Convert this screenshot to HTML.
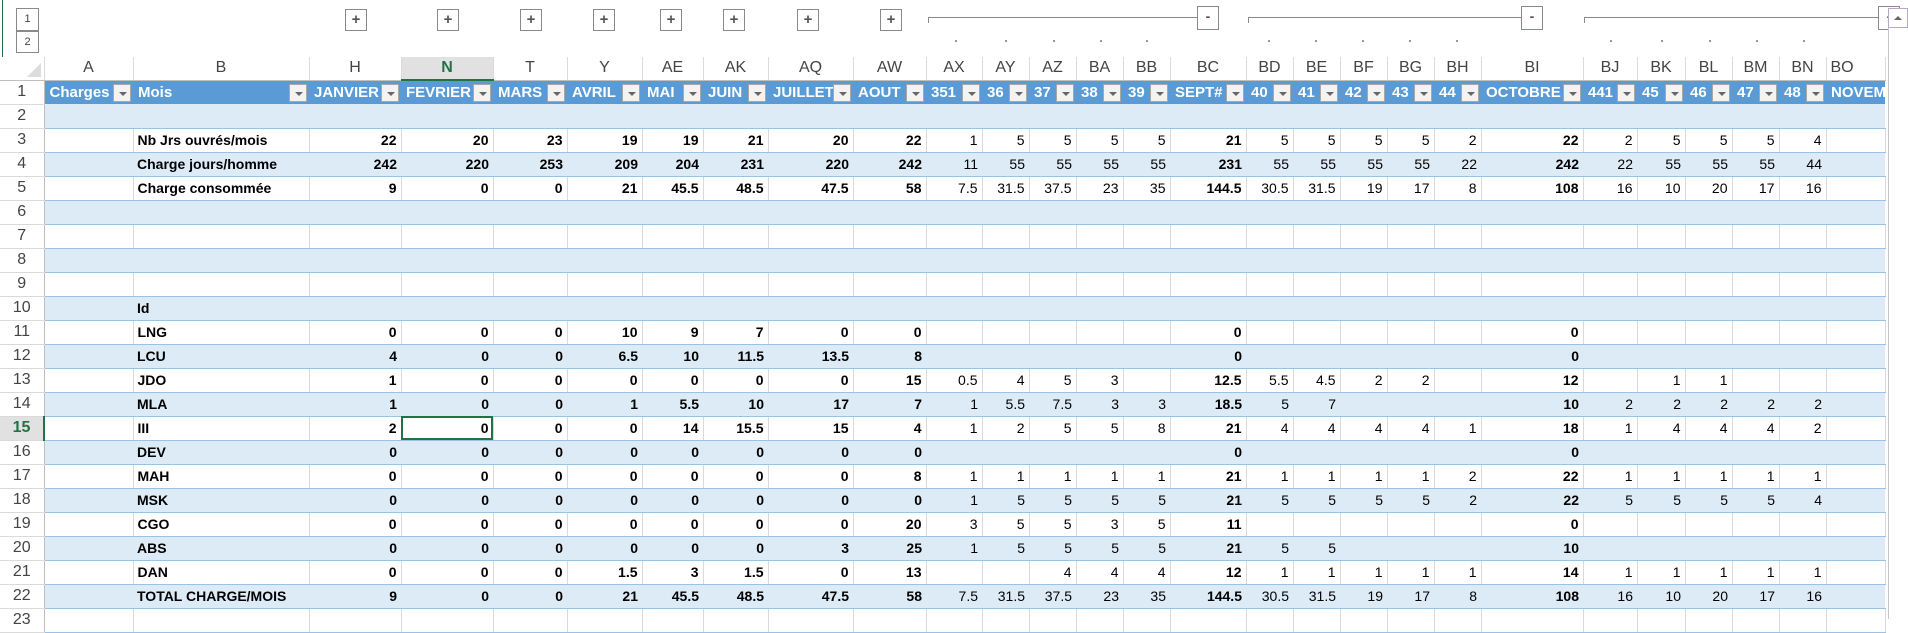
<!DOCTYPE html>
<html><head><meta charset="utf-8">
<style>
*{margin:0;padding:0;box-sizing:border-box}
body{width:1908px;height:619px;overflow:hidden;background:#fff;font-family:"Liberation Sans",sans-serif;position:relative}
.ob{position:absolute;border:1px solid #8a8a8a;background:#fff;font-size:11px;color:#444;text-align:center}
.pl{position:absolute;top:9px;width:22px;height:22px;border:1px solid #8a8a8a;background:#fff;color:#555;font-size:15px;line-height:19px;text-align:center;font-weight:bold}
.gl{position:absolute;top:17px;height:6px;border-top:1px solid #8a8a8a;border-left:1px solid #8a8a8a}
.mb{position:absolute;top:6px;width:22px;height:24px;border:1px solid #8a8a8a;background:#fff;color:#6b4a5a;font-size:14px;line-height:18px;text-align:center;font-weight:bold}
.dt{position:absolute;top:40px;width:2px;height:2px;background:#999}
table{position:absolute;top:57px;left:0;border-collapse:collapse;table-layout:fixed;width:1885px}
td{height:24px;font-size:14px;white-space:nowrap;overflow:hidden;padding:0 4px;text-align:right;font-weight:bold;color:#000;position:relative}
tr.ch td{height:23px;font-weight:normal;text-align:center;color:#444;font-size:16px;border-right:1px solid #dadada;border-bottom:1px solid #bfbfbf}
td.rh{text-align:center;font-weight:normal;color:#444;font-size:16px;border-right:1px solid #bfbfbf;border-bottom:1px solid #dadada;background:#fff;padding:0}
tr.h td:not(.rh){background:#5b9bd5;color:#fff;text-align:left;font-size:15px;padding-left:5px}
tr.b td:not(.rh){background:#ddebf7;border-bottom:1px solid #9bc2e6}
tr.w td:not(.rh){background:#fff;border-bottom:1px solid #9bc2e6;border-right:1px solid #d9d9d9}
td.l{text-align:left}
tr td:nth-child(n+12):nth-child(-n+16),tr td:nth-child(n+18):nth-child(-n+22),tr td:nth-child(n+24):nth-child(-n+28){font-weight:normal}
tr.h td:nth-child(n+2){font-weight:bold!important}
.dd{position:absolute;right:2px;top:3px;width:18px;height:18px;background:#f3f3f3;border:1px solid #a8a8a8}
.dd:after{content:"";position:absolute;left:5px;top:7px;border-left:4px solid transparent;border-right:4px solid transparent;border-top:4px solid #666}
.sel{outline:2px solid #217346;outline-offset:-2px}
</style></head><body>
<div style="position:absolute;left:2px;top:0;width:1px;height:619px;background:#217346"></div>
<div class="ob" style="left:16px;top:8px;width:23px;height:23px;line-height:21px">1</div>
<div class="ob" style="left:16px;top:31px;width:23px;height:22px;line-height:20px">2</div>
<div class="pl" style="left:345px">+</div>
<div class="pl" style="left:437px">+</div>
<div class="pl" style="left:520px">+</div>
<div class="pl" style="left:593px">+</div>
<div class="pl" style="left:660px">+</div>
<div class="pl" style="left:723px">+</div>
<div class="pl" style="left:797px">+</div>
<div class="pl" style="left:880px">+</div>
<div class="gl" style="left:928px;width:269px"></div><div class="mb" style="left:1197px">-</div>
<div class="gl" style="left:1248px;width:273px"></div><div class="mb" style="left:1521px">-</div>
<div class="gl" style="left:1584px;width:300px"></div><div class="mb" style="left:1878px">-</div>
<div class="dt" style="left:955px"></div><div class="dt" style="left:1005px"></div><div class="dt" style="left:1053px"></div><div class="dt" style="left:1100px"></div><div class="dt" style="left:1146px"></div>
<div class="dt" style="left:1268px"></div><div class="dt" style="left:1315px"></div><div class="dt" style="left:1362px"></div><div class="dt" style="left:1409px"></div><div class="dt" style="left:1456px"></div>
<div class="dt" style="left:1610px"></div><div class="dt" style="left:1661px"></div><div class="dt" style="left:1709px"></div><div class="dt" style="left:1756px"></div><div class="dt" style="left:1803px"></div>
<table>
<colgroup><col style="width:44px"><col style="width:89px"><col style="width:176px"><col style="width:92px"><col style="width:92px"><col style="width:74px"><col style="width:75px"><col style="width:61px"><col style="width:65px"><col style="width:85px"><col style="width:73px"><col style="width:56px"><col style="width:47px"><col style="width:47px"><col style="width:47px"><col style="width:47px"><col style="width:76px"><col style="width:47px"><col style="width:47px"><col style="width:47px"><col style="width:47px"><col style="width:47px"><col style="width:102px"><col style="width:54px"><col style="width:48px"><col style="width:47px"><col style="width:47px"><col style="width:47px"><col style="width:59px"></colgroup>
<tr class="ch"><td style="background:#fff;position:relative"><div style="position:absolute;right:3px;bottom:3px;border-left:14px solid transparent;border-bottom:14px solid #dcdcdc"></div></td><td>A</td><td>B</td><td>H</td><td style="background:#e1e1e1;color:#217346;font-weight:bold;border-bottom:2px solid #217346">N</td><td>T</td><td>Y</td><td>AE</td><td>AK</td><td>AQ</td><td>AW</td><td>AX</td><td>AY</td><td>AZ</td><td>BA</td><td>BB</td><td>BC</td><td>BD</td><td>BE</td><td>BF</td><td>BG</td><td>BH</td><td>BI</td><td>BJ</td><td>BK</td><td>BL</td><td>BM</td><td>BN</td><td style="text-align:left">BO</td></tr>
<tr class="h"><td class="rh">1</td><td>Charges<span class="dd"></span></td><td>Mois<span class="dd"></span></td><td>JANVIER<span class="dd"></span></td><td>FEVRIER<span class="dd"></span></td><td>MARS<span class="dd"></span></td><td>AVRIL<span class="dd"></span></td><td>MAI<span class="dd"></span></td><td>JUIN<span class="dd"></span></td><td>JUILLET<span class="dd"></span></td><td>AOUT<span class="dd"></span></td><td>351<span class="dd"></span></td><td>36<span class="dd"></span></td><td>37<span class="dd"></span></td><td>38<span class="dd"></span></td><td>39<span class="dd"></span></td><td>SEPT#<span class="dd"></span></td><td>40<span class="dd"></span></td><td>41<span class="dd"></span></td><td>42<span class="dd"></span></td><td>43<span class="dd"></span></td><td>44<span class="dd"></span></td><td>OCTOBRE<span class="dd"></span></td><td>441<span class="dd"></span></td><td>45<span class="dd"></span></td><td>46<span class="dd"></span></td><td>47<span class="dd"></span></td><td>48<span class="dd"></span></td><td>NOVEMBRE</td></tr>
<tr class="b"><td class="rh">2</td><td></td><td></td><td></td><td></td><td></td><td></td><td></td><td></td><td></td><td></td><td></td><td></td><td></td><td></td><td></td><td></td><td></td><td></td><td></td><td></td><td></td><td></td><td></td><td></td><td></td><td></td><td></td><td></td></tr>
<tr class="w"><td class="rh">3</td><td></td><td class="l">Nb Jrs ouvrés/mois</td><td>22</td><td>20</td><td>23</td><td>19</td><td>19</td><td>21</td><td>20</td><td>22</td><td>1</td><td>5</td><td>5</td><td>5</td><td>5</td><td>21</td><td>5</td><td>5</td><td>5</td><td>5</td><td>2</td><td>22</td><td>2</td><td>5</td><td>5</td><td>5</td><td>4</td><td></td></tr>
<tr class="b"><td class="rh">4</td><td></td><td class="l">Charge jours/homme</td><td>242</td><td>220</td><td>253</td><td>209</td><td>204</td><td>231</td><td>220</td><td>242</td><td>11</td><td>55</td><td>55</td><td>55</td><td>55</td><td>231</td><td>55</td><td>55</td><td>55</td><td>55</td><td>22</td><td>242</td><td>22</td><td>55</td><td>55</td><td>55</td><td>44</td><td></td></tr>
<tr class="w"><td class="rh">5</td><td></td><td class="l">Charge consommée</td><td>9</td><td>0</td><td>0</td><td>21</td><td>45.5</td><td>48.5</td><td>47.5</td><td>58</td><td>7.5</td><td>31.5</td><td>37.5</td><td>23</td><td>35</td><td>144.5</td><td>30.5</td><td>31.5</td><td>19</td><td>17</td><td>8</td><td>108</td><td>16</td><td>10</td><td>20</td><td>17</td><td>16</td><td></td></tr>
<tr class="b"><td class="rh">6</td><td></td><td></td><td></td><td></td><td></td><td></td><td></td><td></td><td></td><td></td><td></td><td></td><td></td><td></td><td></td><td></td><td></td><td></td><td></td><td></td><td></td><td></td><td></td><td></td><td></td><td></td><td></td><td></td></tr>
<tr class="w"><td class="rh">7</td><td></td><td></td><td></td><td></td><td></td><td></td><td></td><td></td><td></td><td></td><td></td><td></td><td></td><td></td><td></td><td></td><td></td><td></td><td></td><td></td><td></td><td></td><td></td><td></td><td></td><td></td><td></td><td></td></tr>
<tr class="b"><td class="rh">8</td><td></td><td></td><td></td><td></td><td></td><td></td><td></td><td></td><td></td><td></td><td></td><td></td><td></td><td></td><td></td><td></td><td></td><td></td><td></td><td></td><td></td><td></td><td></td><td></td><td></td><td></td><td></td><td></td></tr>
<tr class="w"><td class="rh">9</td><td></td><td></td><td></td><td></td><td></td><td></td><td></td><td></td><td></td><td></td><td></td><td></td><td></td><td></td><td></td><td></td><td></td><td></td><td></td><td></td><td></td><td></td><td></td><td></td><td></td><td></td><td></td><td></td></tr>
<tr class="b"><td class="rh">10</td><td></td><td class="l">Id</td><td></td><td></td><td></td><td></td><td></td><td></td><td></td><td></td><td></td><td></td><td></td><td></td><td></td><td></td><td></td><td></td><td></td><td></td><td></td><td></td><td></td><td></td><td></td><td></td><td></td><td></td></tr>
<tr class="w"><td class="rh">11</td><td></td><td class="l">LNG</td><td>0</td><td>0</td><td>0</td><td>10</td><td>9</td><td>7</td><td>0</td><td>0</td><td></td><td></td><td></td><td></td><td></td><td>0</td><td></td><td></td><td></td><td></td><td></td><td>0</td><td></td><td></td><td></td><td></td><td></td><td></td></tr>
<tr class="b"><td class="rh">12</td><td></td><td class="l">LCU</td><td>4</td><td>0</td><td>0</td><td>6.5</td><td>10</td><td>11.5</td><td>13.5</td><td>8</td><td></td><td></td><td></td><td></td><td></td><td>0</td><td></td><td></td><td></td><td></td><td></td><td>0</td><td></td><td></td><td></td><td></td><td></td><td></td></tr>
<tr class="w"><td class="rh">13</td><td></td><td class="l">JDO</td><td>1</td><td>0</td><td>0</td><td>0</td><td>0</td><td>0</td><td>0</td><td>15</td><td>0.5</td><td>4</td><td>5</td><td>3</td><td></td><td>12.5</td><td>5.5</td><td>4.5</td><td>2</td><td>2</td><td></td><td>12</td><td></td><td>1</td><td>1</td><td></td><td></td><td></td></tr>
<tr class="b"><td class="rh">14</td><td></td><td class="l">MLA</td><td>1</td><td>0</td><td>0</td><td>1</td><td>5.5</td><td>10</td><td>17</td><td>7</td><td>1</td><td>5.5</td><td>7.5</td><td>3</td><td>3</td><td>18.5</td><td>5</td><td>7</td><td></td><td></td><td></td><td>10</td><td>2</td><td>2</td><td>2</td><td>2</td><td>2</td><td></td></tr>
<tr class="w"><td class="rh" style="background:#e1e1e1;color:#217346;font-weight:bold;border-right:2px solid #217346">15</td><td></td><td class="l">III</td><td>2</td><td class="sel">0</td><td>0</td><td>0</td><td>14</td><td>15.5</td><td>15</td><td>4</td><td>1</td><td>2</td><td>5</td><td>5</td><td>8</td><td>21</td><td>4</td><td>4</td><td>4</td><td>4</td><td>1</td><td>18</td><td>1</td><td>4</td><td>4</td><td>4</td><td>2</td><td></td></tr>
<tr class="b"><td class="rh">16</td><td></td><td class="l">DEV</td><td>0</td><td>0</td><td>0</td><td>0</td><td>0</td><td>0</td><td>0</td><td>0</td><td></td><td></td><td></td><td></td><td></td><td>0</td><td></td><td></td><td></td><td></td><td></td><td>0</td><td></td><td></td><td></td><td></td><td></td><td></td></tr>
<tr class="w"><td class="rh">17</td><td></td><td class="l">MAH</td><td>0</td><td>0</td><td>0</td><td>0</td><td>0</td><td>0</td><td>0</td><td>8</td><td>1</td><td>1</td><td>1</td><td>1</td><td>1</td><td>21</td><td>1</td><td>1</td><td>1</td><td>1</td><td>2</td><td>22</td><td>1</td><td>1</td><td>1</td><td>1</td><td>1</td><td></td></tr>
<tr class="b"><td class="rh">18</td><td></td><td class="l">MSK</td><td>0</td><td>0</td><td>0</td><td>0</td><td>0</td><td>0</td><td>0</td><td>0</td><td>1</td><td>5</td><td>5</td><td>5</td><td>5</td><td>21</td><td>5</td><td>5</td><td>5</td><td>5</td><td>2</td><td>22</td><td>5</td><td>5</td><td>5</td><td>5</td><td>4</td><td></td></tr>
<tr class="w"><td class="rh">19</td><td></td><td class="l">CGO</td><td>0</td><td>0</td><td>0</td><td>0</td><td>0</td><td>0</td><td>0</td><td>20</td><td>3</td><td>5</td><td>5</td><td>3</td><td>5</td><td>11</td><td></td><td></td><td></td><td></td><td></td><td>0</td><td></td><td></td><td></td><td></td><td></td><td></td></tr>
<tr class="b"><td class="rh">20</td><td></td><td class="l">ABS</td><td>0</td><td>0</td><td>0</td><td>0</td><td>0</td><td>0</td><td>3</td><td>25</td><td>1</td><td>5</td><td>5</td><td>5</td><td>5</td><td>21</td><td>5</td><td>5</td><td></td><td></td><td></td><td>10</td><td></td><td></td><td></td><td></td><td></td><td></td></tr>
<tr class="w"><td class="rh">21</td><td></td><td class="l">DAN</td><td>0</td><td>0</td><td>0</td><td>1.5</td><td>3</td><td>1.5</td><td>0</td><td>13</td><td></td><td></td><td>4</td><td>4</td><td>4</td><td>12</td><td>1</td><td>1</td><td>1</td><td>1</td><td>1</td><td>14</td><td>1</td><td>1</td><td>1</td><td>1</td><td>1</td><td></td></tr>
<tr class="b"><td class="rh">22</td><td></td><td class="l">TOTAL CHARGE/MOIS</td><td>9</td><td>0</td><td>0</td><td>21</td><td>45.5</td><td>48.5</td><td>47.5</td><td>58</td><td>7.5</td><td>31.5</td><td>37.5</td><td>23</td><td>35</td><td>144.5</td><td>30.5</td><td>31.5</td><td>19</td><td>17</td><td>8</td><td>108</td><td>16</td><td>10</td><td>20</td><td>17</td><td>16</td><td></td></tr>
<tr class="w"><td class="rh">23</td><td></td><td></td><td></td><td></td><td></td><td></td><td></td><td></td><td></td><td></td><td></td><td></td><td></td><td></td><td></td><td></td><td></td><td></td><td></td><td></td><td></td><td></td><td></td><td></td><td></td><td></td><td></td><td></td></tr>
</table>
<div style="position:absolute;left:1888px;top:8px;width:20px;height:611px;background:#fff;border-left:1px solid #c8c8c8"></div>
<div style="position:absolute;left:1888px;top:8px;width:20px;height:20px;border:1px solid #b9a9c9;background:#fff"><div style="position:absolute;left:5px;top:7px;border-left:4px solid transparent;border-right:4px solid transparent;border-bottom:4px solid #666"></div></div>
</body></html>
